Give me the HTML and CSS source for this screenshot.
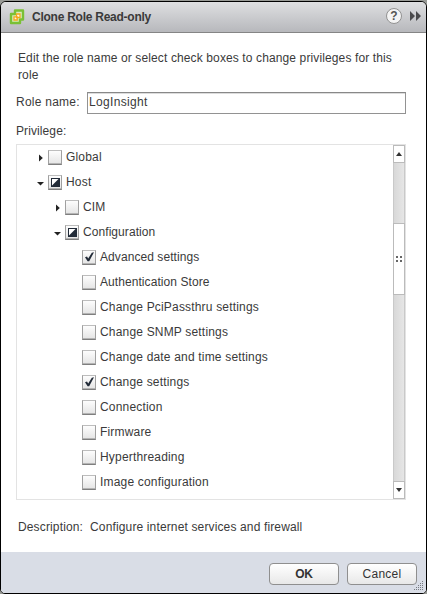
FILE: index.html
```html
<!DOCTYPE html>
<html lang="en">
<head>
<meta charset="utf-8">
<title>Clone Role Read-only</title>
<link rel="stylesheet" href="styles.css">
</head>
<body>
<svg width="0" height="0" class="defs" aria-hidden="true">
  <defs>
    <symbol id="right" viewBox="0 0 7 8"><path d="M2 0.5 L5.8 4 L2 7.5Z" fill="#222"/></symbol>
    <symbol id="down" viewBox="0 0 7 8"><path d="M0 3 H7 L3.5 6.6Z" fill="#222"/></symbol>
    <symbol id="check" viewBox="0 0 14 15"><path d="M3 7.2 L5 6.6 L6.2 8.6 L9.8 2.7 L12 2.2 L7.2 11.3 L5.6 11.3Z" fill="#222b38"/></symbol>
    <symbol id="partial" viewBox="0 0 14 15"><path d="M3 3 H12 V12 H3Z" fill="#222b38"/><path d="M4 4 H10.5 L4 10.5Z" fill="#fff"/></symbol>
  </defs>
</svg>
<div class="dialog">
  <header class="titlebar">
    <svg class="logo" width="16" height="16" viewBox="0 0 16 16">
      <path d="M6 1.5 H14 V10.5 H11 V14 H2 V5 H6Z" fill="#d9ecbb" stroke="#7ac035" stroke-width="2.4" stroke-linejoin="round"/>
      <path d="M7.5 5 H11 V8.5 H7.5Z M5 7.8 H8.2 V11 H5Z" fill="#fff8e0" stroke="#f3a71c" stroke-width="1.3"/>
    </svg>
    <h1>Clone Role Read-only</h1>
    <span class="help">?</span>
    <svg class="more" width="11" height="10" viewBox="0 0 11 10"><path d="M0 0 L5 5 L0 10Z M6 0 L11 5 L6 10Z" fill="#4a4a4c"/></svg>
  </header>
  <main>
    <p class="intro">Edit the role name or select check boxes to change privileges for this<br>role</p>
    <div class="field"><label for="role">Role name:</label><input id="role" type="text" value="LogInsight"></div>
    <div class="label">Privilege:</div>
    <div class="tree">
      <ul>
        <li class="l1"><svg class="arrow"><use href="#right"/></svg><span class="box"></span><span>Global</span></li>
        <li class="l1"><svg class="arrow"><use href="#down"/></svg><span class="box"><svg><use href="#partial"/></svg></span><span>Host</span></li>
        <li class="l2"><svg class="arrow"><use href="#right"/></svg><span class="box"></span><span>CIM</span></li>
        <li class="l2 snug"><svg class="arrow"><use href="#down"/></svg><span class="box"><svg><use href="#partial"/></svg></span><span>Configuration</span></li>
        <li class="l3 snug"><span class="box"><svg><use href="#check"/></svg></span><span>Advanced settings</span></li>
        <li class="l3 snug"><span class="box"></span><span>Authentication Store</span></li>
        <li class="l3"><span class="box"></span><span>Change PciPassthru settings</span></li>
        <li class="l3"><span class="box"></span><span>Change SNMP settings</span></li>
        <li class="l3"><span class="box"></span><span>Change date and time settings</span></li>
        <li class="l3"><span class="box"><svg><use href="#check"/></svg></span><span>Change settings</span></li>
        <li class="l3"><span class="box"></span><span>Connection</span></li>
        <li class="l3"><span class="box"></span><span>Firmware</span></li>
        <li class="l3"><span class="box"></span><span>Hyperthreading</span></li>
        <li class="l3"><span class="box"></span><span>Image configuration</span></li>
      </ul>
      <div class="scrollbar">
        <div class="step"><svg width="6" height="4" viewBox="0 0 6 4"><path d="M3 0 L6 4 H0Z" fill="#333"/></svg></div>
        <div class="track before"></div>
        <div class="thumb"><i></i><i></i><i></i><i></i></div>
        <div class="track"></div>
        <div class="step"><svg width="6" height="4" viewBox="0 0 6 4"><path d="M0 0 H6 L3 4Z" fill="#333"/></svg></div>
      </div>
    </div>
    <p class="description"><span>Description:</span><span>Configure internet services and firewall</span></p>
  </main>
  <footer>
    <button class="primary">OK</button>
    <button>Cancel</button>
    <svg class="grip" width="10" height="10" viewBox="0 0 10 10"><path d="M8 0h1v1h-1z M6 2h1v1h-1z M8 2h1v1h-1z M4 4h1v1h-1z M6 4h1v1h-1z M8 4h1v1h-1z M2 6h1v1h-1z M4 6h1v1h-1z M6 6h1v1h-1z M8 6h1v1h-1z M0 8h1v1h-1z M2 8h1v1h-1z M4 8h1v1h-1z M6 8h1v1h-1z M8 8h1v1h-1z" fill="#777b82"/></svg>
  </footer>
</div>
</body>
</html>
```
FILE: styles.css
```css
* { box-sizing: border-box; }
body {
  margin: 0;
  padding-top: 1px;
  height: 594px;
  overflow: hidden;
  background: #989a96;
  font: 12px/17px "Liberation Sans", Arial, sans-serif;
  letter-spacing: 0.18px;
  color: #3a3a3a;
}
.defs { position: absolute; }
.dialog {
  position: relative;
  display: flex;
  flex-direction: column;
  width: 427px;
  height: 593px;
  border: 1px solid #000;
  border-radius: 6px 6px 5px 5px;
  background: #fff;
  overflow: hidden;
}
.titlebar {
  display: flex;
  align-items: center;
  height: 31px;
  padding: 0 4px 1px 8px;
  border-bottom: 1px solid #858585;
  background: linear-gradient(#dedfe1, #b7b8bc);
}
h1 {
  flex: 1;
  margin: 1px 0 0 7px;
  font-size: 12px;
  line-height: 17px;
  letter-spacing: -0.25px;
}
.help {
  width: 16px;
  height: 16px;
  margin: 0 8px 1px 0;
  border: 1px solid #929292;
  border-radius: 50%;
  background: #f4f4f4;
  font-weight: bold;
  line-height: 14px;
  letter-spacing: 0;
  text-align: center;
  color: #555;
}
.more { margin: 0 1px 1px 0; }
main { flex: 1; padding: 17px 20px 0 15px; }
.intro { margin: 0 -10px 0 2px; white-space: nowrap; letter-spacing: 0.12px; }
.field { display: flex; align-items: center; height: 22px; margin-top: 8px; }
.field label { width: 71px; margin-top: -2px; white-space: nowrap; letter-spacing: 0.25px; }
input {
  flex: 1;
  min-width: 0;
  height: 22px;
  padding: 0 2px 3px 1px;
  border: 1px solid #929292;
  border-top-color: #888;
  border-radius: 0;
  background: #fff;
  box-shadow: inset 0 1px #dcdcdc;
  font: inherit;
  letter-spacing: 0.33px;
  color: inherit;
}
.label { margin-top: 9px; letter-spacing: 0.1px; }
.tree {
  display: flex;
  height: 356px;
  margin-top: 4px;
  border: 1px solid #e3e3e3;
}
ul { flex: 1; margin: 0; padding: 0; list-style: none; }
li { display: flex; align-items: center; height: 25px; white-space: nowrap; }
.snug { letter-spacing: 0.07px; }
.l1 { padding-left: 20px; }
.l2 { padding-left: 37px; }
.l3 { padding-left: 65px; }
.arrow { width: 7px; height: 8px; margin-right: 4px; }
.box {
  width: 14px;
  height: 15px;
  margin-right: 4px;
  border: 1px solid;
  border-color: #bdbdbd #a0a0a0 #7e7e7e;
  background: linear-gradient(#fdfdfd, #e4e4e4);
  box-shadow: inset 0 -1px #b4b4b4;
}
.box svg { display: block; width: 14px; height: 15px; margin: -1px; }
.scrollbar {
  display: flex;
  flex-direction: column;
  width: 12px;
}
.step {
  display: flex;
  align-items: center;
  justify-content: center;
  height: 18px;
  border: 1px solid #bbb;
  background: #fff;
}
.track {
  flex: 1;
  border: solid #c9c9c9;
  border-width: 0 1px;
  background: linear-gradient(90deg, #d8d8d8, #e6e6e6);
}
.before { flex: 0 0 60px; }
.thumb {
  display: grid;
  grid-template-columns: 2px 2px;
  grid-auto-rows: 2px;
  gap: 2px;
  place-content: center;
  height: 72px;
  border: 1px solid #bbb;
  background: #fff;
}
.thumb i { background: #666; }
.description { display: flex; gap: 7px; margin: 19px 0 0 2px; letter-spacing: 0.14px; }
footer {
  display: flex;
  gap: 8px;
  justify-content: flex-end;
  height: 41px;
  padding: 11px 9px 0;
  background: #d9dde6;
}
button {
  width: 70px;
  height: 22px;
  padding: 0;
  border: 1px solid #8f8f8f;
  border-radius: 4px;
  background: linear-gradient(#fff, #e8e8e8);
  font: inherit;
  letter-spacing: 0.25px;
  color: #333;
}
.primary { font-weight: bold; letter-spacing: -0.3px; }
.grip { position: absolute; right: 2px; bottom: 2px; }
```
